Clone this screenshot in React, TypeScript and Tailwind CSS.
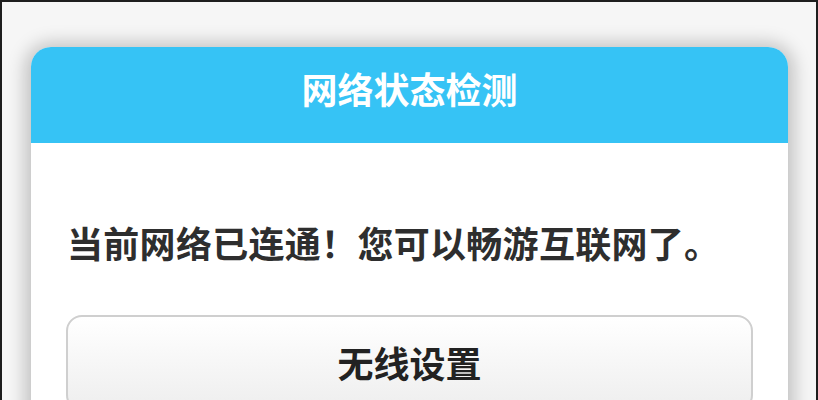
export default function App() {
  return (
    <div className="w-[818px] h-[400px] overflow-hidden bg-[#f6f6f6] border-x-2 border-t-2 border-[#1e1e1e] pt-[45px] pl-[29px] pr-[28px]">
      <div
        className="rounded-[20px] bg-white shadow-[0_2px_18px_6px_rgba(0,0,0,0.22)]"
        style={{ fontFamily: '"Noto Sans CJK SC", "Noto Sans", sans-serif' }}
      >
        {/* 标题栏 */}
        <div className="h-[96px] rounded-t-[20px] bg-[#36c3f5] flex items-center justify-center pb-[14px]">
          <h1 className="text-white text-[36px] font-bold leading-none">网络状态检测</h1>
        </div>
        <div className="px-[35px] pt-[81px] pb-[40px]">
          <p className="pl-[1px] text-[#2e2e2e] text-[36px] font-bold leading-none tracking-[0.3px]">当前网络已连通！您可以畅游互联网了。</p>
          <button className="mt-[55px] w-full h-[96px] rounded-[16px] border-2 border-[#cfcfcf] bg-gradient-to-b from-white to-[#eeeeee] text-[#222] text-[36px] font-bold leading-none pb-[2px]">
            无线设置
          </button>
        </div>
      </div>
    </div>
  );
}
